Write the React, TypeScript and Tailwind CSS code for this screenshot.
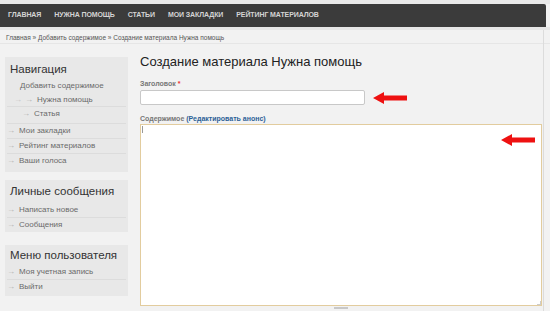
import React from "react";

const Arrow = () => (
  <svg width="34" height="12" viewBox="0 0 34 12" className="block">
    <polygon points="0,6 11,0 11,3.5 34,3.5 34,8.5 11,8.5 11,12" fill="#ee1111" />
  </svg>
);

const Item = ({ children, indent = 0, first = false, extra = false, h = 15 }: { children: React.ReactNode; indent?: number; first?: boolean; extra?: boolean; h?: number }) => (
  <div className={`flex items-center border-t ${first ? "border-transparent" : "border-[#dcdcdc]"} text-[8px] text-[#6a6a6a]`} style={{ paddingLeft: indent, height: h }}>
    {extra && <span className="text-[#c4c4c4] mr-[3px] -ml-[10px]">→</span>}
    <span className="text-[#b0b0b0] mr-[4px]">→</span>
    <span>{children}</span>
  </div>
);

export default function App() {
  const font = { fontFamily: '"Liberation Sans", Arial, sans-serif' };
  return (
    <div className="w-[550px] h-[311px] overflow-hidden bg-[#f2f2f2] relative" style={font}>
      <div className="h-[4px] bg-[#e9e9e9]" />
      <div className="w-[546px] h-[23px] bg-[#3b3b3b] rounded-tr-[2px] flex items-center pl-[8px] gap-[13px] text-[7px] font-bold text-[#d4d4d4] tracking-[-0.1px]">
        <span>ГЛАВНАЯ</span>
        <span>НУЖНА ПОМОЩЬ</span>
        <span>СТАТЬИ</span>
        <span>МОИ ЗАКЛАДКИ</span>
        <span>РЕЙТИНГ МАТЕРИАЛОВ</span>
      </div>
      <div className="h-[3px] bg-[#e6e6e6]" />
      <div className="absolute left-[543px] top-[30px] bottom-0 w-px bg-[#dcdcdc]" />
      <div className="h-[14px] flex items-center pl-[6px] pt-[2px] text-[6.5px] text-[#555] border-b border-[#e6e6e6]">
        Главная » Добавить содержимое » Создание материала Нужна помощь
      </div>
      <div className="flex">
        <div className="w-[123px] ml-[5px] mt-[13px] flex flex-col">
          <div className="bg-[#e8e8e8] pl-[2px] pr-[2px] h-[115px]">
            <div className="text-[11.5px] text-[#333] pt-[5px] pb-[2px] pl-[3px] leading-[15px]">Навигация</div>
            <div className="flex items-center h-[13px] pl-[13px] text-[8px] text-[#6a6a6a]">Добавить содержимое</div>
            <Item indent={17} first extra h={14}>Нужна помощь</Item>
            <Item indent={15} h={14}>Статья</Item>
            <div className="h-[3px]" />
            <Item indent={0}>Мои закладки</Item>
            <Item indent={0}>Рейтинг материалов</Item>
            <Item indent={0}>Ваши голоса</Item>
          </div>
          <div className="bg-[#e8e8e8] pl-[2px] pr-[2px] h-[52px] mt-[8px]">
            <div className="text-[11.5px] text-[#333] pt-[4px] pb-[3px] pl-[3px] leading-[15px]">Личные сообщения</div>
            <Item indent={0} first>Написать новое</Item>
            <Item indent={0}>Сообщения</Item>
          </div>
          <div className="bg-[#e8e8e8] pl-[2px] pr-[2px] h-[51px] mt-[13px]">
            <div className="text-[11.5px] text-[#333] pt-[3px] pb-[1px] pl-[3px] leading-[15px]">Меню пользователя</div>
            <Item indent={0} first>Моя учетная запись</Item>
            <Item indent={0}>Выйти</Item>
          </div>
        </div>
        <div className="ml-[12px] flex-1 pt-[9px]">
          <div className="text-[13px] text-[#222] leading-[18px]">Создание материала Нужна помощь</div>
          <div className="mt-[8px] text-[7px] font-bold text-[#777] leading-[9px]">
            Заголовок <span className="text-[#e33]">*</span>
          </div>
          <div className="flex items-center mt-[2px]">
            <div className="w-[225px] h-[15px] bg-white border border-[#c8c8c8] rounded-[2px]" />
            <div className="ml-[8px]"><Arrow /></div>
          </div>
          <div className="mt-[9px] text-[7px] font-bold text-[#777] leading-[9px]">
            Содержимое <span className="text-[#2c5f96]">(Редактировать анонс)</span>
          </div>
          <div className="relative w-[402px] h-[182px] mt-[1px] bg-white border border-[#e2cc9e]">
            <div className="absolute left-[1px] top-[1px] w-px h-[7px] bg-[#999]" />
            <div className="absolute right-[6px] top-[9px]"><Arrow /></div>
            <div className="absolute right-0 bottom-0 w-[4px] h-[4px] border-r border-b border-[#ccc]" />
          </div>
          <div className="w-[402px] flex justify-center">
            <div className="w-[14px] h-[2px] mt-[1px] bg-[#c8c8c8]" />
          </div>
        </div>
      </div>
    </div>
  );
}
